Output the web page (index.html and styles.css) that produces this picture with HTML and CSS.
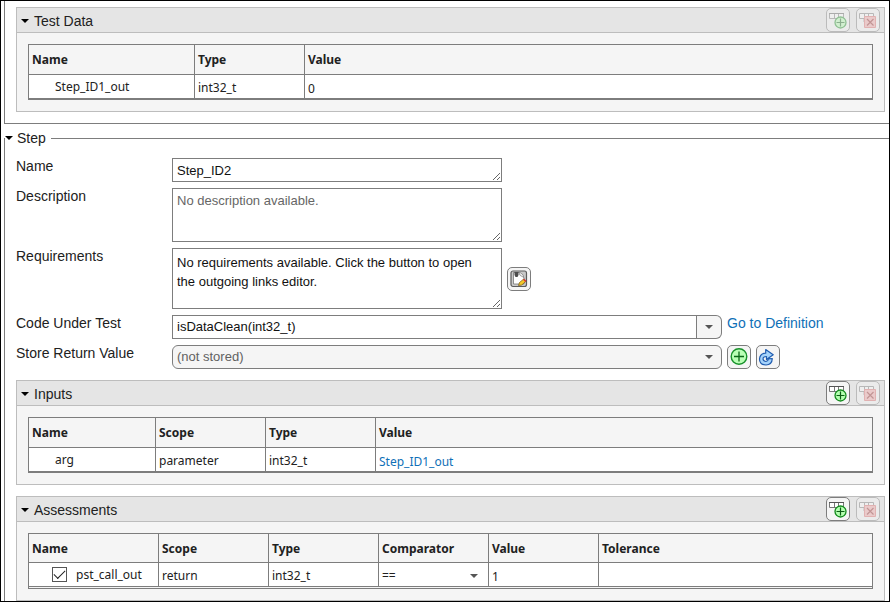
FILE: index.html
```html
<!DOCTYPE html>
<html lang="en">
<head>
<meta charset="utf-8">
<title>Test case editor</title>
<link rel="stylesheet" href="styles.css">
</head>
<body>
<svg class="defs" aria-hidden="true">
  <symbol id="row-add" viewBox="1 1 22 22">
    <path d="M9 11h9v3H9z" fill="#d9d9d9"/>
    <path d="M3.500 5.500h14v5h-14zM8.500 5.500v5M12.500 5.500v5" fill="#fff" stroke="#777"/>
    <path d="M3 5.500h15" stroke="#555"/>
    <circle cx="14.500" cy="14.500" r="5.500" fill="#b4ffb0" stroke="#128a1c" stroke-width="1.300"/>
    <path d="M14.500 10.500v8M10.500 14.500h8" stroke="#0b5f14" stroke-width="1.200"/>
  </symbol>
  <symbol id="row-delete" viewBox="1 1 22 22">
    <path d="M7 11h3v3H7z" fill="#bbb"/>
    <path d="M3.500 5.500h14v5h-14zM8.500 5.500v5M12.500 5.500v5" fill="#fff" stroke="#777"/>
    <path d="M8.500 8.500h11v11h-11z" fill="#f3a3a3" stroke="#d66"/>
    <path d="M11 11l6.500 6.500M17.500 11L11 17.500" stroke="#8d2020" stroke-width="1.200"/>
  </symbol>
</svg>
<main class="window">
  <section class="previous-step">
    <section class="panel">
      <header class="panel-header">
        <button type="button" class="toggle">Test Data</button>
        <button type="button" class="icon-button" aria-label="Add row" disabled><svg><use href="#row-add"/></svg></button>
        <button type="button" class="icon-button" aria-label="Delete row" disabled><svg><use href="#row-delete"/></svg></button>
      </header>
      <div class="panel-body">
        <table>
          <colgroup><col class="col-data-name"><col class="col-std"><col></colgroup>
          <thead><tr><th>Name</th><th>Type</th><th>Value</th></tr></thead>
          <tbody><tr><td class="name">Step_ID1_out</td><td>int32_t</td><td class="value">0</td></tr></tbody>
        </table>
      </div>
    </section>
  </section>

  <fieldset class="step">
    <legend><button type="button" class="toggle">Step</button></legend>
    <div class="form">
      <div class="row">
        <label for="name">Name</label>
        <textarea id="name" class="text name-field">Step_ID2</textarea>
      </div>
      <div class="row">
        <label for="description">Description</label>
        <textarea id="description" class="text description-field" placeholder="No description available."></textarea>
      </div>
      <div class="row">
        <label for="requirements">Requirements</label>
        <textarea id="requirements" class="text requirements-field" readonly>No requirements available. Click the button to open the outgoing links editor.</textarea>
        <button type="button" class="icon-button centered" aria-label="Open outgoing links editor">
          <svg viewBox="1 1 22 22">
            <rect x="4" y="4" width="15.500" height="15.500" rx="2" fill="#c9c9c9" stroke="#5c5c5c" stroke-width="1.200"/>
            <path d="M6.500 5.500h6.500q4 1.500 4 6v5.500H6.500z" fill="#fff" stroke="#777" stroke-width=".8"/>
            <path d="M12.500 5.500q-.5 3 1.500 3.500 2 0 3 2.500" fill="#ddd" stroke="#888" stroke-width=".7"/>
            <path d="M7.500 5h4v3L10.500 10h-2L7.500 8z" fill="#4d4d4d"/>
            <path d="M11.500 18.500l1-3 4-3.300 2.200 2.300-4 3.500z" fill="#f5c928" stroke="#75550c" stroke-width=".7"/>
            <path d="M16 12.700l1.200-1 2.200 2.300-1.200 1z" fill="#db3434"/>
          </svg>
        </button>
      </div>
      <div class="row">
        <label for="code">Code Under Test</label>
        <div class="combo">
          <input id="code" type="text" value="isDataClean(int32_t)">
          <button type="button" class="combo-button" aria-label="Choose function"></button>
        </div>
        <a href="#definition">Go to Definition</a>
      </div>
      <div class="row">
        <label for="store">Store Return Value</label>
        <div class="select-box store-box">
          <select id="store"><option>(not stored)</option></select>
        </div>
        <button type="button" class="icon-button" aria-label="Add variable">
          <svg viewBox="1 1 22 22">
            <circle cx="12" cy="11.500" r="7.800" fill="#b9ffb5" stroke="#17912a" stroke-width="1.400"/>
            <path d="M12 6.500v10M7 11.500h10" stroke="#0b6a18" stroke-width="1.300"/>
          </svg>
        </button>
        <button type="button" class="icon-button" aria-label="Refresh">
          <svg viewBox="1 1 22 22">
            <path d="M9.700 4.500L17.200 9.700L10.500 14.500V11.500Q7 11.500 7 14.200Q7.500 16.500 10 16.500Q12.200 16.200 12.500 13.800L16.300 13.500Q16 19.800 10 20Q3.500 19.800 3.500 14Q4 8.200 9.700 8.200Z" fill="#a5d3fb" stroke="#1f5cb0" stroke-width="1.200" stroke-linejoin="round"/>
          </svg>
        </button>
      </div>
    </div>

    <section class="panel">
      <header class="panel-header">
        <button type="button" class="toggle">Inputs</button>
        <button type="button" class="icon-button" aria-label="Add input"><svg><use href="#row-add"/></svg></button>
        <button type="button" class="icon-button" aria-label="Delete input" disabled><svg><use href="#row-delete"/></svg></button>
      </header>
      <div class="panel-body">
        <table>
          <colgroup><col class="col-input-name"><col class="col-std"><col class="col-std"><col></colgroup>
          <thead><tr><th>Name</th><th>Scope</th><th>Type</th><th>Value</th></tr></thead>
          <tbody><tr><td class="name">arg</td><td>parameter</td><td>int32_t</td><td class="value"><a href="#step-id1">Step_ID1_out</a></td></tr></tbody>
        </table>
      </div>
    </section>

    <section class="panel">
      <header class="panel-header">
        <button type="button" class="toggle">Assessments</button>
        <button type="button" class="icon-button" aria-label="Add assessment"><svg><use href="#row-add"/></svg></button>
        <button type="button" class="icon-button" aria-label="Delete assessment" disabled><svg><use href="#row-delete"/></svg></button>
      </header>
      <div class="panel-body">
        <table class="assessments">
          <colgroup><col class="col-check-name"><col class="col-std"><col class="col-std"><col class="col-std"><col class="col-std"><col></colgroup>
          <thead><tr><th>Name</th><th>Scope</th><th>Type</th><th>Comparator</th><th>Value</th><th>Tolerance</th></tr></thead>
          <tbody><tr>
            <td class="name"><label class="check"><input type="checkbox" checked>pst_call_out</label></td>
            <td>return</td>
            <td>int32_t</td>
            <td><div class="select-box cell-select"><select aria-label="Comparator"><option>==</option></select></div></td>
            <td class="value">1</td>
            <td></td>
          </tr></tbody>
        </table>
      </div>
    </section>
  </fieldset>
</main>
</body>
</html>
```
FILE: styles.css
```css
* { box-sizing: border-box; }

body {
  margin: 0;
  background: #fff;
  color: #212121;
  font: 14px/16px "Liberation Sans", Arial, sans-serif;
}

button, input, select, textarea { margin: 0; font: inherit; color: inherit; }

a { color: #0f70b7; text-decoration: none; }

.defs { display: none; }

.window {
  height: 100vh;
  overflow: hidden;
  border: 1px solid #000;
  padding-left: 3px;
}

.previous-step {
  border: solid #7d7d7d;
  border-width: 0 0 1px 1px;
  padding: 6px 4px 11px 11px;
}

.step {
  margin: 5px 0 0;
  min-width: 0;
  border: 1px solid #7d7d7d;
  border-right: 0;
  padding: 0 4px 12px 0;
}

legend { padding: 0 5px 0 0; }

.toggle {
  display: flex;
  align-items: center;
  gap: 4px;
  border: 0;
  padding: 0;
  background: none;
  line-height: 18px;
}

.toggle::before {
  content: "";
  border: 4px solid transparent;
  border-top-color: #000;
  border-bottom: 0;
}

.step > .form, .step > .panel { margin-left: 11px; }

.form {
  display: grid;
  gap: 6px;
  padding-top: 11px;
  margin-bottom: 11px;
}

.row { display: flex; align-items: flex-start; gap: 5px; }
.row > label { width: 151px; }

.text {
  width: 330px;
  border: 1px solid #7d7d7d;
  border-radius: 0;
  padding: 2px 16px 2px 4px;
  background: #fff;
  color: #111;
  font-size: 13px;
  line-height: 19px;
  overflow: hidden;
  resize: both;
}

.text::placeholder { color: #666; }

.name-field { height: 24px; }
.description-field { height: 54px; }
.requirements-field { height: 61px; padding-top: 4px; }

.combo, .store-box { width: 550px; height: 24px; font-size: 13px; }
.combo { display: flex; }

.combo input {
  flex: 1;
  min-width: 0;
  border: 1px solid #7d7d7d;
  padding: 0 4px;
  color: #111;
}

.combo-button {
  width: 25px;
  border: 1px solid #7d7d7d;
  border-left: 0;
  border-radius: 0 6px 6px 0;
  padding: 0;
  background: #f5f5f5;
  display: grid;
  place-items: center;
}

.combo-button::before, .select-box::after {
  content: "";
  border: 4px solid transparent;
  border-top-color: #555;
  border-bottom: 0;
}

.select-box { display: grid; grid-template-columns: 1fr 8px 9px; align-items: center; }
.select-box select {
  grid-area: 1 / 1 / 2 / 4;
  width: 100%;
  height: 100%;
  appearance: none;
  border: 0;
  border-radius: 0;
  padding: 0;
  background: none;
}
.select-box::after { grid-area: 1 / 2 / 2 / 3; pointer-events: none; }

.store-box select {
  border: 1px solid #7d7d7d;
  border-radius: 6px;
  padding: 0 4px;
  background: #f5f5f5;
  color: #616161;
}

.icon-button {
  flex: none;
  width: 24px;
  height: 24px;
  border: 1px solid #7d7d7d;
  border-radius: 5px;
  padding: 0;
  background: #f5f5f5;
}
.icon-button svg { display: block; width: 22px; height: 22px; fill: none; }
.icon-button:disabled { opacity: .4; }
.centered { align-self: center; }

.panel { border: 1px solid #bdbdbd; background: #f5f5f5; }
.panel + .panel { margin-top: 11px; }

.panel-header {
  display: flex;
  gap: 6px;
  border-bottom: 1px solid #bdbdbd;
  padding: 0 4px;
  background: #e5e5e5;
}
.panel-header .toggle { margin-right: auto; gap: 5px; padding-top: 1px; }

.panel-body { padding: 11px; }

table {
  width: 100%;
  table-layout: fixed;
  border: 1px solid #7d7d7d;
  border-bottom-width: 2px;
  border-collapse: separate;
  border-spacing: 0;
  font: 12px/16px "Noto Sans", sans-serif;
}

th, td {
  border-right: 1px solid #7d7d7d;
  padding: 0 3px;
  text-align: left;
}
th:last-child, td:last-child { border-right: 0; }
th { height: 30px; padding-top: 1px; border-bottom: 1px solid #7d7d7d; }
td { height: 23px; padding-top: 2px; background: #fff; }
td.name { padding: 0 0 0 26px; }
td.value { padding-top: 5px; }

.assessments { border-bottom: 3px double #7d7d7d; }
.assessments th { height: 29px; }
.assessments td.name { padding-left: 23px; }

.col-std { width: 110px; }
.col-data-name { width: 166px; }
.col-input-name { width: 127px; }
.col-check-name { width: 130px; }

.check { display: flex; align-items: center; gap: 9px; }
.check input {
  appearance: none;
  width: 15px;
  height: 15px;
  border: 1px solid #555;
  background: #fff;
  display: grid;
  place-items: center;
}
.check input:checked::before {
  content: "";
  width: 10px;
  height: 5px;
  border: solid #222;
  border-width: 0 0 1px 1px;
  transform: translateY(-2px) rotate(-45deg);
}

.cell-select { height: 18px; grid-template-columns: 1fr 8px 7px; }
```
